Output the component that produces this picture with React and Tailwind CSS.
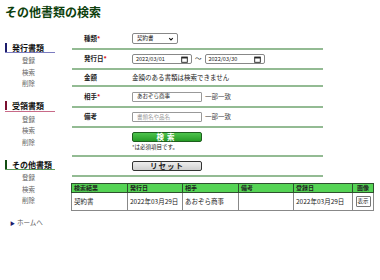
import React from "react";

const FONT = { fontFamily: '"Noto Sans CJK JP", "Noto Sans", sans-serif' };

const MENU = [
  { title: "発行書類", bar: "bg-[#1c1c6b]", line: "border-[#7c7cc0]" },
  { title: "受領書類", bar: "bg-[#7a1030]", line: "border-[#c86a88]" },
  { title: "その他書類", bar: "bg-[#124d12]", line: "border-[#5c9a5c]" },
];

const Row = ({ label, req, h, children }) => (
  <div className={`grid grid-cols-[60px_1fr] items-center border-b-2 border-[#93bb93] ${h}`}>
    <div className="pl-[12px] font-bold text-[6.5px] text-[#222]">
      {label}
      {req && <span className="text-[#e01010]">*</span>}
    </div>
    <div className="flex items-center">{children}</div>
  </div>
);

const Calendar = () => (
  <svg width="7" height="7" viewBox="0 0 10 10" className="ml-auto mr-[3px]">
    <rect x="1" y="1.5" width="8" height="7.5" fill="none" stroke="#222" strokeWidth="1.3" />
    <rect x="1" y="1.5" width="8" height="2" fill="#222" />
  </svg>
);

const DateBox = ({ value }) => (
  <div className="flex items-center w-[60px] h-[10px] border border-[#888] rounded-[2px] pl-[3px] text-[5.5px] text-[#222]">
    {value}
    <Calendar />
  </div>
);

const TextBox = ({ value, placeholder }) => (
  <div className="flex items-center w-[70px] h-[10px] border border-[#999] rounded-[1px] pl-[4px] text-[5.5px]">
    {value ? <span className="text-[#222]">{value}</span> : <span className="text-[#999]">{placeholder}</span>}
  </div>
);

export default function App() {
  return (
    <div className="w-[380px] h-[280px] bg-white text-[#222] overflow-hidden" style={FONT}>
      <h1 className="pl-[5px] pt-[5px] text-[12px] leading-[14px] font-bold text-[#0d3f0d]">その他書類の検索</h1>

      <div className="flex">
        {/* side menu */}
        <div className="w-[72px] pl-[5px] pt-[23px] shrink-0">
          {MENU.map((m) => (
            <div key={m.title} className="w-[50px] mb-[11px]">
              <div className={`flex items-center h-[11px] border-b ${m.line}`}>
                <div className={`w-[2px] h-[9px] ${m.bar}`} />
                <span className="ml-[5px] text-[8px] leading-[9px] font-bold text-[#111] whitespace-nowrap">{m.title}</span>
              </div>
              <ul className="pt-[2px] pl-[17px] text-[6.5px] text-[#666]">
                <li className="h-[11.5px] leading-[11.5px]">登録</li>
                <li className="h-[11.5px] leading-[11.5px]">検索</li>
                <li className="h-[11.5px] leading-[11.5px]">削除</li>
              </ul>
            </div>
          ))}
          <div className="flex items-center pl-[5px] text-[6.5px] text-[#555]">
            <span className="text-[5px] text-[#1c1c6b] mr-[2px]">▶</span>ホームへ
          </div>
        </div>

        {/* main */}
        <div className="pt-[10px]">
          <div className="w-[251px]">
            <Row label="種類" req h="h-[21px]">
              <div className="flex items-center w-[46px] h-[11px] border border-[#888] rounded-[2px] pl-[4px] text-[5.5px]">
                契約書
                <svg width="6" height="6" viewBox="0 0 10 10" className="ml-auto mr-[3px]">
                  <path d="M2 3.5 L5 6.5 L8 3.5" fill="none" stroke="#111" strokeWidth="1.8" />
                </svg>
              </div>
            </Row>
            <Row label="発行日" req h="h-[20px]">
              <DateBox value="2022/03/01" />
              <span className="mx-[3px] text-[6.5px]">～</span>
              <DateBox value="2022/03/30" />
            </Row>
            <Row label="金額" h="h-[17px]">
              <span className="text-[6.5px]">金額のある書類は検索できません</span>
            </Row>
            <Row label="相手" req h="h-[21px]">
              <TextBox value="あおぞら商事" />
              <span className="ml-[3px] text-[6.5px] text-[#444]">一部一致</span>
            </Row>
            <Row label="備考" h="h-[20px]">
              <TextBox placeholder="書類名や品名" />
              <span className="ml-[3px] text-[6.5px] text-[#444]">一部一致</span>
            </Row>
            <div className="grid grid-cols-[60px_1fr] border-b-2 border-[#93bb93] h-[29px]">
              <div />
              <div className="pt-[4px]">
                <div className="flex items-center justify-center w-[70px] h-[10px] rounded-[2px] border border-[#1d5e1d] bg-gradient-to-b from-[#4cc44c] to-[#259b25] text-white text-[7.5px] font-bold tracking-[3px]">
                  検索
                </div>
                <div className="mt-[1px] text-[5.5px] leading-[8px]">*は必須項目です。</div>
              </div>
            </div>
            <div className="grid grid-cols-[60px_1fr] items-center border-b-2 border-[#93bb93] h-[20px]">
              <div />
              <div className="flex items-center justify-center w-[70px] h-[10px] rounded-[2px] border border-[#333] bg-gradient-to-b from-[#eee] to-[#d0d0d0] text-[#222] text-[7.5px] font-bold tracking-[1px]">
                リセット
              </div>
            </div>
          </div>

          {/* results */}
          <table className="mt-[6px] -ml-[1px] w-[302px] border-collapse border border-[#2a5e2a] text-[6px] table-fixed">
            <colgroup>
              <col className="w-[56px]" />
              <col className="w-[55px]" />
              <col className="w-[56px]" />
              <col className="w-[55px]" />
              <col className="w-[59px]" />
              <col className="w-[21px]" />
            </colgroup>
            <thead>
              <tr className="h-[9px] bg-[#55d455] text-left font-bold">
                <th className="border border-[#2f4f2f] pl-[2px] leading-[8px]">検索結果</th>
                <th className="border border-[#2f4f2f] pl-[2px] leading-[8px]">発行日</th>
                <th className="border border-[#2f4f2f] pl-[2px] leading-[8px]">相手</th>
                <th className="border border-[#2f4f2f] pl-[2px] leading-[8px]">備考</th>
                <th className="border border-[#2f4f2f] pl-[2px] leading-[8px]">登録日</th>
                <th className="border border-[#2f4f2f] text-center leading-[8px]">画像</th>
              </tr>
            </thead>
            <tbody>
              <tr className="h-[18px] text-[6.5px]">
                <td className="border border-[#888] pl-[2px]">契約書</td>
                <td className="border border-[#888] pl-[2px]">2022年03月29日</td>
                <td className="border border-[#888] pl-[2px]">あおぞら商事</td>
                <td className="border border-[#888] pl-[2px]"></td>
                <td className="border border-[#888] pl-[2px]">2022年03月29日</td>
                <td className="border border-[#888]">
                  <div className="mx-auto flex items-center justify-center w-[15px] h-[11px] border border-[#777] rounded-[1px] text-[5.5px]">表示</div>
                </td>
              </tr>
            </tbody>
          </table>
        </div>
      </div>
    </div>
  );
}
